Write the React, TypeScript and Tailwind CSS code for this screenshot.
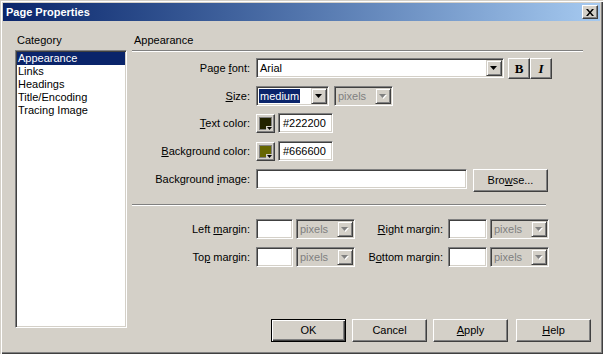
import React from 'react';

const sunken =
  'border border-t-[#808080] border-l-[#808080] border-r-white border-b-white shadow-[inset_1px_1px_0_#404040,inset_-1px_-1px_0_#d4d0c8]';
const raised =
  'border border-t-white border-l-white border-r-[#404040] border-b-[#404040] shadow-[inset_-1px_-1px_0_#808080] bg-[#d4d0c8]';
const arrowBtn =
  'border border-t-[#d4d0c8] border-l-[#d4d0c8] border-r-[#404040] border-b-[#404040] shadow-[inset_1px_1px_0_#fff,inset_-1px_-1px_0_#808080] bg-[#d4d0c8]';

function Arrow({ disabled }: { disabled?: boolean }) {
  return (
    <svg width="8" height="5" viewBox="0 0 8 5">
      {disabled && <polygon points="1,1 8,1 4.5,5" fill="#fff" />}
      <polygon points="0,0 7,0 3.5,4" fill={disabled ? '#808080' : '#000'} />
    </svg>
  );
}

function Combo({
  width,
  value,
  disabled,
  selected,
}: {
  width: string;
  value: string;
  disabled?: boolean;
  selected?: boolean;
}) {
  return (
    <div className={`${sunken} ${width} h-[20px] p-[1px] flex ${disabled ? 'bg-[#d4d0c8]' : 'bg-white'}`}>
      <div className={`flex-1 flex items-center pl-[1px] ${disabled ? 'text-[#808080]' : 'text-black'}`}>
        {selected ? <span className="bg-[#0a246a] text-white px-[1px] leading-[14px]">{value}</span> : <span className="pl-[1px]">{value}</span>}
      </div>
      <div className={`${arrowBtn} w-[16px] h-full flex items-center justify-center`}>
        <Arrow disabled={disabled} />
      </div>
    </div>
  );
}

function Field({ width, value }: { width: string; value?: string }) {
  return (
    <div className={`${sunken} ${width} h-[20px] bg-white flex items-center pl-[4px]`}>{value}</div>
  );
}

function Label({ width, children }: { width: string; children: React.ReactNode }) {
  return <div className={`${width} text-right leading-[13px] whitespace-nowrap`}>{children}</div>;
}

function Swatch({ color }: { color: string }) {
  return (
    <div className={`${raised} relative w-[19px] h-[19px] p-[2px]`}>
      <div className={`w-full h-full border border-[#808080] ${color}`} />
      <div className="absolute right-[1px] bottom-[1px] w-[7px] h-[5px] bg-[#d4d0c8] flex items-center justify-center">
        <svg width="5" height="3" viewBox="0 0 5 3">
          <polygon points="0,0 5,0 2.5,3" fill="#000" />
        </svg>
      </div>
    </div>
  );
}

function Button({ children, def }: { children: React.ReactNode; def?: boolean }) {
  return (
    <div
      className={
        def
          ? 'w-[75px] h-[23px] flex items-center justify-center border border-black bg-[#d4d0c8] shadow-[inset_1px_1px_0_#fff,inset_-1px_-1px_0_#404040,inset_-2px_-2px_0_#808080]'
          : `${raised} w-[75px] h-[23px] flex items-center justify-center`
      }
    >
      {children}
    </div>
  );
}

export default function App() {
  return (
    <div
      className="w-[603px] h-[354px] bg-[#d4d0c8] p-[3px] shadow-[inset_1px_1px_0_#d4d0c8,inset_2px_2px_0_#fff,inset_-1px_-1px_0_#404040,inset_-2px_-2px_0_#808080] text-[11px] text-black overflow-hidden"
      style={{ fontFamily: '"Liberation Sans", Arial, sans-serif' }}
    >
      <div className="h-[18px] bg-gradient-to-r from-[#0a246a] to-[#a6caf0] flex items-center justify-between pl-[3px] pr-[2px]">
        <span className="text-white font-bold text-[11px]">Page Properties</span>
        <div className={`${raised} w-[16px] h-[14px] flex items-center justify-center`}>
          <svg width="8" height="7" viewBox="0 0 8 7">
            <path d="M0 0h2l2 2.5L6 0h2L5 3.5 8 7H6L4 4.5 2 7H0l3-3.5z" fill="#000" />
          </svg>
        </div>
      </div>

      <div className="flex pl-[12px] pt-[13px]">
        <div className="w-[112px] flex flex-col">
          <div className="h-[13px] leading-[13px] pl-[2px]">Category</div>
          <div className={`${sunken} mt-[3px] h-[278px] bg-white p-[1px]`}>
            <div className="h-[13px] leading-[13px] pl-[1px] bg-[#0a246a] text-white">Appearance</div>
            <div className="h-[13px] leading-[13px] pl-[1px]">Links</div>
            <div className="h-[13px] leading-[13px] pl-[1px]">Headings</div>
            <div className="h-[13px] leading-[13px] pl-[1px]">Title/Encoding</div>
            <div className="h-[13px] leading-[13px] pl-[1px]">Tracing Image</div>
          </div>
        </div>

        <div className="ml-[5px] w-[459px] flex flex-col">
          <div className="h-[13px] leading-[13px] pl-[2px]">Appearance</div>
          <div className="mt-[3px] w-[451px] h-[2px] border-t border-t-[#808080] border-b border-b-white" />

          <div className="mt-[6px] h-[20px] flex items-start">
            <div className="h-[20px] flex items-center">
              <Label width="w-[118px]">
                Page <u>f</u>ont:
              </Label>
            </div>
            <div className="ml-[6px]">
              <Combo width="w-[248px]" value="Arial" />
            </div>
            <div className={`${raised} ml-[4px] w-[22px] h-[21px] flex items-center justify-center font-bold text-[13px]`} style={{ fontFamily: '"Liberation Serif", serif' }}>
              B
            </div>
            <div className={`${raised} w-[22px] h-[21px] flex items-center justify-center font-bold italic text-[13px]`} style={{ fontFamily: '"Liberation Serif", serif' }}>
              I
            </div>
          </div>

          <div className="mt-[8px] h-[20px] flex items-center">
            <Label width="w-[118px]">
              <u>S</u>ize:
            </Label>
            <div className="ml-[6px]">
              <Combo width="w-[73px]" value="medium" selected />
            </div>
            <div className="ml-[5px]">
              <Combo width="w-[59px]" value="pixels" disabled />
            </div>
          </div>

          <div className="mt-[7px] h-[20px] flex items-center">
            <Label width="w-[118px]">
              <u>T</u>ext color:
            </Label>
            <div className="ml-[6px]">
              <Swatch color="bg-[#222200]" />
            </div>
            <div className="ml-[3px]">
              <Field width="w-[55px]" value="#222200" />
            </div>
          </div>

          <div className="mt-[8px] h-[20px] flex items-center">
            <Label width="w-[118px]">
              <u>B</u>ackground color:
            </Label>
            <div className="ml-[6px]">
              <Swatch color="bg-[#666600]" />
            </div>
            <div className="ml-[3px]">
              <Field width="w-[55px]" value="#666600" />
            </div>
          </div>

          <div className="mt-[8px] h-[20px] flex items-start">
            <div className="h-[20px] flex items-center">
              <Label width="w-[118px]">
                Background <u>i</u>mage:
              </Label>
            </div>
            <div className="ml-[6px]">
              <Field width="w-[211px]" />
            </div>
            <div className={`${raised} ml-[6px] w-[75px] h-[23px] flex items-center justify-center`}>
              <span>
                Bro<u>w</u>se...
              </span>
            </div>
          </div>

          <div className="mt-[15px] w-[414px] h-[2px] border-t border-t-[#808080] border-b border-b-white" />

          <div className="mt-[13px] h-[20px] flex items-center">
            <Label width="w-[118px]">
              Left <u>m</u>argin:
            </Label>
            <div className="ml-[6px]">
              <Field width="w-[37px]" />
            </div>
            <div className="ml-[3px]">
              <Combo width="w-[59px]" value="pixels" disabled />
            </div>
            <Label width="w-[88px]">
              <u>R</u>ight margin:
            </Label>
            <div className="ml-[5px]">
              <Field width="w-[39px]" />
            </div>
            <div className="ml-[3px]">
              <Combo width="w-[59px]" value="pixels" disabled />
            </div>
          </div>

          <div className="mt-[8px] h-[20px] flex items-center">
            <Label width="w-[118px]">
              To<u>p</u> margin:
            </Label>
            <div className="ml-[6px]">
              <Field width="w-[37px]" />
            </div>
            <div className="ml-[3px]">
              <Combo width="w-[59px]" value="pixels" disabled />
            </div>
            <Label width="w-[88px]">
              B<u>o</u>ttom margin:
            </Label>
            <div className="ml-[5px]">
              <Field width="w-[39px]" />
            </div>
            <div className="ml-[3px]">
              <Combo width="w-[59px]" value="pixels" disabled />
            </div>
          </div>

          <div className="mt-[52px] ml-[139px] flex">
            <Button def>OK</Button>
            <div className="ml-[6px]">
              <Button>Cancel</Button>
            </div>
            <div className="ml-[6px]">
              <Button>
                <span>
                  <u>A</u>pply
                </span>
              </Button>
            </div>
            <div className="ml-[8px]">
              <Button>
                <span>
                  <u>H</u>elp
                </span>
              </Button>
            </div>
          </div>
        </div>
      </div>
    </div>
  );
}
